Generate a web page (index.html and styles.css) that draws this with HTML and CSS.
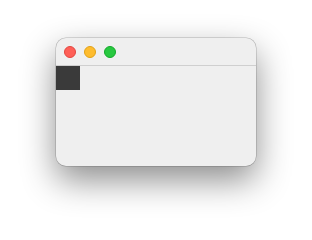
FILE: index.html
```html
<!DOCTYPE html>
<html>
<head>
<meta charset="utf-8">
<link rel="stylesheet" href="styles.css">
</head>
<body>
<div class="window">
  <div class="titlebar">
    <span class="dot red"></span>
    <span class="dot yellow"></span>
    <span class="dot green"></span>
  </div>
  <div class="content">
    <div class="block"></div>
  </div>
</div>
</body>
</html>
```
FILE: styles.css
```css
html, body {
  margin: 0;
  padding: 0;
  background: #ffffff;
}
body {
  width: 312px;
  height: 240px;
  padding: 38px 0 0 56px;
  box-sizing: border-box;
  font-family: "Liberation Sans", sans-serif;
}
.window {
  width: 200px;
  height: 128px;
  background: #efefef;
  border-radius: 10px;
  box-shadow: 0 0 0 0.5px rgba(0,0,0,0.25), 0 14px 34px rgba(0,0,0,0.45);
  overflow: hidden;
  display: flex;
  flex-direction: column;
}
.titlebar {
  height: 27px;
  border-bottom: 1px solid #cfcfcf;
  display: flex;
  align-items: center;
  gap: 8px;
  padding: 0 0 0 8px;
}
.dot {
  width: 12px;
  height: 12px;
  border-radius: 50%;
  box-sizing: border-box;
}
.red { background: #fe5f57; border: 0.5px solid #e2463f; }
.yellow { background: #febc2e; border: 0.5px solid #e1a116; }
.green { background: #28c840; border: 0.5px solid #13a929; }
.content {
  flex: 1;
}
.block {
  width: 24px;
  height: 24px;
  background: #3a3a3a;
}
```
